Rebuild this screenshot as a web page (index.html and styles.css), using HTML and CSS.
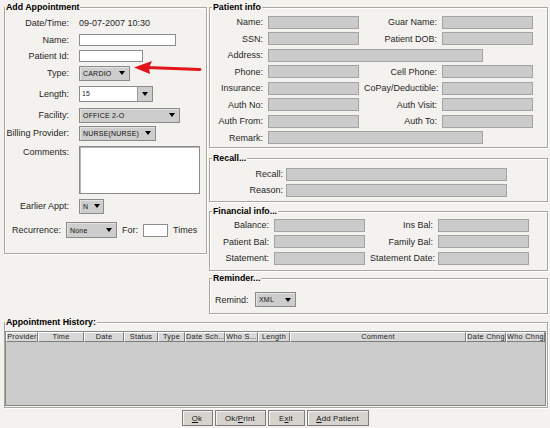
FILE: index.html
```html
<!DOCTYPE html>
<html>
<head>
<meta charset="utf-8">
<title>Add Appointment</title>
<link rel="stylesheet" href="styles.css">
</head>
<body>
<div class="page">
  <div class="top">
    <div class="panel appt">
      <div class="legend legend-left">Add Appointment</div>
      <div class="lgrid">
        <span class="lbl">Date/Time:</span><span class="val">09-07-2007 10:30</span>
        <span class="lbl">Name:</span><div class="tf w-name"></div>
        <span class="lbl">Patient Id:</span><div class="tf w-pid"></div>
        <span class="lbl">Type:</span><div class="dd w-type"><span>CARDIO</span><i class="tri"></i></div>
        <span class="lbl">Length:</span><div class="combo"><span class="combo-text">15</span><span class="combo-btn"><i class="tri"></i></span></div>
        <span class="lbl">Facility:</span><div class="dd w-fac"><span>OFFICE 2-O</span><i class="tri"></i></div>
        <span class="lbl">Billing Provider:</span><div class="dd w-bill"><span>NURSE(NURSE)</span><i class="tri"></i></div>
        <span class="lbl lbl-top">Comments:</span><div class="ta"></div>
        <span class="lbl">Earlier Appt:</span><div class="dd w-early"><span>N</span><i class="tri"></i></div>
      </div>
      <div class="recur">
        <span class="recur-lbl">Recurrence:</span>
        <div class="dd w-type"><span>None</span><i class="tri"></i></div>
        <span class="for">For:</span>
        <div class="tf w-times"></div>
        <span class="times">Times</span>
      </div>
      <svg class="arrow" width="75" height="20" viewBox="0 0 75 20">
        <line x1="17" y1="9.5" x2="70" y2="11.5" stroke="#e3141b" stroke-width="3" stroke-linecap="round"/>
        <polygon points="4,9.5 22,3 19,9.8 20,16" fill="#e3141b"/>
      </svg>
    </div>

    <div class="right">
      <div class="panel pinfo">
        <div class="legend">Patient info</div>
        <div class="pgrid">
          <span class="lbl">Name:</span><div class="gf"></div><span class="lbl">Guar Name:</span><div class="gf"></div>
          <span class="lbl">SSN:</span><div class="gf"></div><span class="lbl">Patient DOB:</span><div class="gf"></div>
          <span class="lbl">Address:</span><div class="gf wide"></div>
          <span class="lbl">Phone:</span><div class="gf"></div><span class="lbl">Cell Phone:</span><div class="gf"></div>
          <span class="lbl">Insurance:</span><div class="gf"></div><span class="lbl">CoPay/Deductible:</span><div class="gf"></div>
          <span class="lbl">Auth No:</span><div class="gf"></div><span class="lbl">Auth Visit:</span><div class="gf"></div>
          <span class="lbl">Auth From:</span><div class="gf"></div><span class="lbl">Auth To:</span><div class="gf"></div>
          <span class="lbl">Remark:</span><div class="gf wide"></div>
        </div>
      </div>

      <div class="panel recall">
        <div class="legend">Recall...</div>
        <div class="rgrid">
          <span class="lbl">Recall:</span><div class="gf"></div>
          <span class="lbl">Reason:</span><div class="gf"></div>
        </div>
      </div>

      <div class="panel fin">
        <div class="legend">Financial info...</div>
        <div class="fgrid">
          <span class="lbl">Balance:</span><div class="gf"></div><span class="lbl">Ins Bal:</span><div class="gf"></div>
          <span class="lbl">Patient Bal:</span><div class="gf"></div><span class="lbl">Family Bal:</span><div class="gf"></div>
          <span class="lbl">Statement:</span><div class="gf"></div><span class="lbl">Statement Date:</span><div class="gf"></div>
        </div>
      </div>

      <div class="panel remind">
        <div class="legend">Reminder...</div>
        <div class="remind-row">
          <span class="remind-lbl">Remind:</span>
          <div class="dd w-xml"><span>XML</span><i class="tri"></i></div>
        </div>
      </div>
    </div>
  </div>

  <div class="panel history">
    <div class="legend legend-left">Appointment History:</div>
    <div class="table">
      <div class="thead">
        <span>Provider</span><span>Time</span><span>Date</span><span>Status</span><span>Type</span><span>Date Sch...</span><span>Who S...</span><span>Length</span><span>Comment</span><span>Date Chng</span><span>Who Chng</span>
      </div>
      <div class="tbody"></div>
    </div>
  </div>

  <div class="buttons">
    <button class="btn b-ok"><u>O</u>k</button>
    <button class="btn b-okp">Ok/<u>P</u>rint</button>
    <button class="btn b-exit">E<u>x</u>it</button>
    <button class="btn b-add"><u>A</u>dd Patient</button>
  </div>
</div>
</body>
</html>
```
FILE: styles.css
```css
* { box-sizing: border-box; }

body {
  margin: 0;
  background: #f4f2ee;
  font-family: "Liberation Sans", Arial, sans-serif;
  font-size: 9px;
  color: #262626;
}

.page {
  width: 550px;
  height: 428px;
  padding-left: 4px;
  overflow: hidden;
}

.top {
  display: flex;
  align-items: flex-start;
}

.panel {
  border: 1px solid #aca79e;
  box-shadow: inset 1px 1px 0 #ffffff, 1px 1px 0 #ffffff;
}

.legend {
  margin-top: -7px;
  margin-left: 2px;
  height: 12px;
  line-height: 12px;
  width: fit-content;
  padding: 0 1px;
  background: #f4f2ee;
  font-weight: bold;
  font-size: 8.8px;
  color: #000;
}

.legend-left { margin-left: 0; }

.lbl {
  text-align: right;
  line-height: 12px;
  white-space: nowrap;
}

/* ---------- left panel ---------- */
.appt {
  position: relative;
  width: 203px;
  height: 247px;
  margin-top: 7px;
}

.lgrid {
  display: grid;
  grid-template-columns: 64px 120px;
  column-gap: 10px;
  grid-template-rows: 20px 14px 18px 16px 26px 16px 20px 53px 20px;
  align-items: center;
}

.val { line-height: 12px; }

.lbl-top {
  align-self: start;
  margin-top: 3px;
}

.tf {
  height: 12px;
  background: #fff;
  border: 1px solid #8d8d8d;
}

.w-name { width: 97px; }
.w-pid { width: 64px; }
.w-times { width: 25px; height: 13px; }

.dd {
  height: 15px;
  background: #cdcdcd;
  border: 1px solid #8b8b8b;
  box-shadow: inset 1px 1px 0 #e2e2e2;
  display: flex;
  align-items: center;
  justify-content: space-between;
  padding: 0 4px 0 3px;
  font-size: 7px;
  letter-spacing: 0.2px;
  color: #111;
}

.tri {
  width: 0;
  height: 0;
  border-left: 3.5px solid transparent;
  border-right: 3.5px solid transparent;
  border-top: 4px solid #000;
}

.w-type { width: 51px; }
.w-fac { width: 101px; }
.w-bill { width: 77px; }
.w-early { width: 25px; padding: 0 3px; }
.w-xml { width: 41px; }

.combo {
  width: 74px;
  height: 16px;
  display: flex;
  border: 1px solid #8b8b8b;
  background: #fff;
}

.combo-text {
  flex: 1;
  font-size: 7px;
  line-height: 14px;
  padding-left: 2px;
}

.combo-btn {
  width: 15px;
  background: #cdcdcd;
  border-left: 1px solid #9a9a9a;
  display: flex;
  align-items: center;
  justify-content: center;
}

.ta {
  align-self: start;
  margin-top: 3px;
  width: 121px;
  height: 48px;
  background: #fff;
  border: 1px solid #8a8a8a;
  box-shadow: inset 1px 1px 0 #b5b5b5;
}

.recur {
  display: flex;
  align-items: center;
  height: 28px;
  padding-left: 7px;
}

.recur-lbl { width: 54px; white-space: nowrap; }
.recur .dd { height: 16px; }
.for { margin-left: 5px; width: 16px; }
.recur .tf { margin-left: 5px; }
.times { margin-left: 5px; }

.arrow {
  position: absolute;
  left: 125px;
  top: 50px;
}

/* ---------- right column ---------- */
.right {
  width: 339px;
  margin-left: 2px;
}

.gf {
  height: 13px;
  background: #cbcbcb;
  border: 1px solid #a3a3a3;
}

.pinfo {
  margin-top: 7px;
  height: 141px;
}

.pgrid {
  display: grid;
  grid-template-columns: 53px 91px 73px 91px;
  column-gap: 5px;
  grid-auto-rows: 16.5px;
  align-items: center;
  padding-top: 1px;
}

.wide {
  grid-column: 2 / span 3;
  width: 215px;
}

.recall {
  margin-top: 10px;
  height: 44px;
}

.rgrid {
  display: grid;
  grid-template-columns: 73px 221px;
  column-gap: 3px;
  grid-auto-rows: 16px;
  align-items: center;
  padding-top: 2px;
}

.fin {
  margin-top: 9px;
  height: 60px;
}

.fgrid {
  display: grid;
  grid-template-columns: 59px 91px 63px 91px;
  column-gap: 5px;
  grid-auto-rows: 16.5px;
  align-items: center;
}

.remind {
  margin-top: 7px;
  height: 36px;
}

.remind-row {
  display: flex;
  align-items: center;
  padding: 8px 0 0 5px;
  height: 23px;
}

.remind-lbl { width: 40px; }

/* ---------- history ---------- */
.history {
  width: 544px;
  height: 86px;
  margin-top: 8px;
}

.table {
  margin: 3px 0 0 0;
  width: 541px;
  height: 75px;
  border: 1px solid #878787;
  display: flex;
  flex-direction: column;
}

.thead {
  display: grid;
  grid-template-columns: 32px 46px 40px 34px 27px 40px 33px 32px 176px 40px 39px;
  height: 10px;
}

.thead span {
  background: #d8d8d8;
  border-top: 1px solid #fff;
  border-left: 1px solid #fff;
  border-right: 1px solid #7c7c7c;
  border-bottom: 1px solid #7c7c7c;
  font-size: 7.3px;
  line-height: 8px;
  text-align: center;
  white-space: nowrap;
  overflow: hidden;
  letter-spacing: 0.3px;
  color: #222;
}

.tbody {
  flex: 1;
  background: #cccccc;
}

/* ---------- buttons ---------- */
.buttons {
  display: flex;
  justify-content: center;
  gap: 2px;
  margin-top: 2px;
  padding-right: 4px;
}

.btn {
  height: 16px;
  padding: 0;
  background: #d6d3ce;
  border: 1px solid #7d7d7d;
  box-shadow: inset 1px 1px 0 #f4f4f4;
  font-family: "Liberation Sans", Arial, sans-serif;
  font-size: 7.8px;
  letter-spacing: 0.2px;
  color: #111;
}

.b-ok { width: 31px; }
.b-okp { width: 51px; }
.b-exit { width: 37px; }
.b-add { width: 62px; }
```
